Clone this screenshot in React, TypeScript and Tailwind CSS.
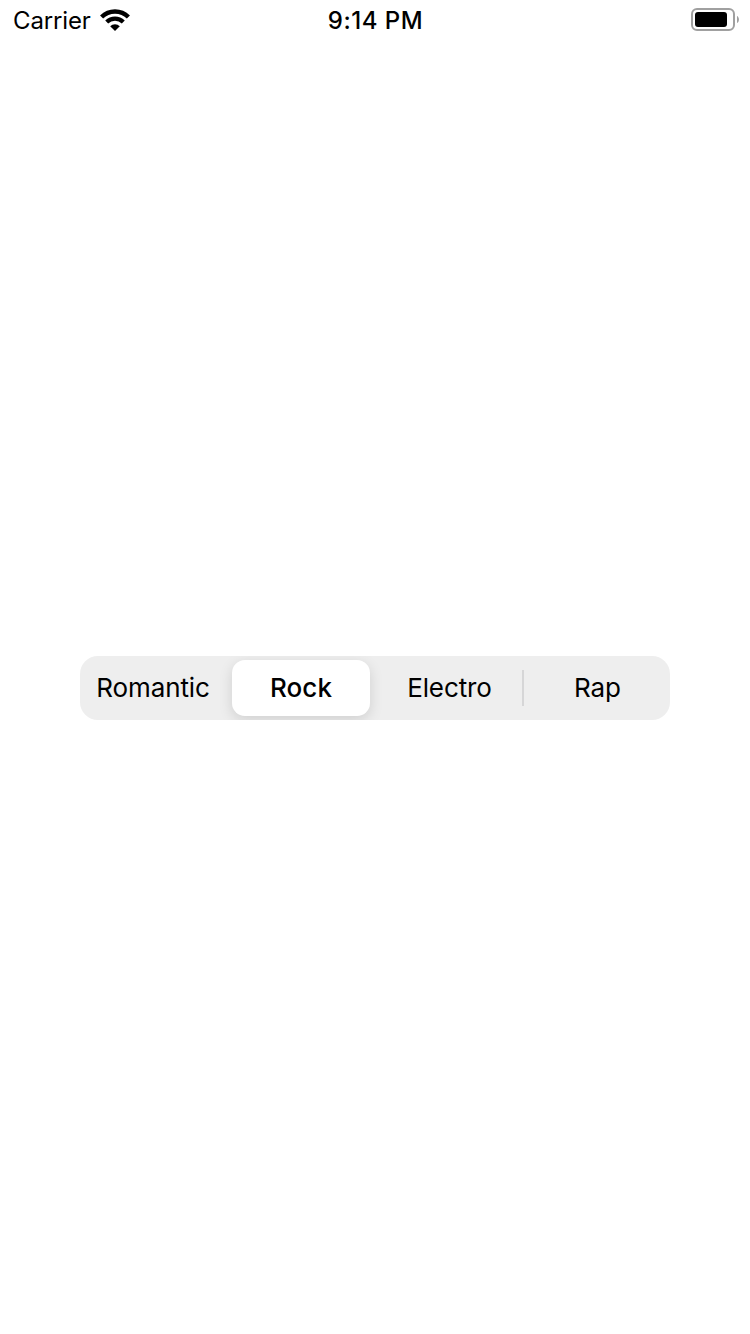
const tabs = [
  { label: "Romantic", style: "w-[146px] tracking-[-0.1px]" },
  { label: "Rock", style: "mx-[6px] w-[138px] rounded-[13px] bg-white font-medium tracking-[0.1px] shadow-[0_4px_14px_rgba(0,0,0,0.13)]" },
  { label: "Electro", style: "w-[146px] pl-px tracking-[-0.1px]" },
  { label: "Rap", style: "w-[146px] pl-px tracking-[-0.1px]" },
];

export default function App() {
  return (
    <div className="flex h-[1334px] w-[750px] flex-col bg-white font-['Inter',sans-serif] text-black">
      <header className="grid h-10 grid-cols-3 items-center pl-[13px] pr-[10px] text-[24px]">
        <div className="flex items-center gap-[9px]">
          <span className="pt-[2px] tracking-[-0.15px]">Carrier</span>
          <svg width="30" height="22" viewBox="0 0 30 22" fill="none" stroke="black">
            <path d="M1.6 8a19 19 0 0 1 26.8 0" strokeWidth="4.4" />
            <path d="M6.7 13.1a11.8 11.8 0 0 1 16.6 0" strokeWidth="4.2" />
            <path d="M10.2 17.2a6.8 6.8 0 0 1 9.6 0L15 22z" fill="black" stroke="none" />
          </svg>
        </div>
        <span className="pt-[2px] pr-[2px] text-center font-medium tracking-[0.5px]">9:14 PM</span>
        <svg className="justify-self-end" width="49" height="24" viewBox="0 0 49 24">
          <rect x="1" y="1" width="42" height="21" rx="5" fill="none" stroke="#a0a0a0" strokeWidth="2" />
          <rect x="4" y="4" width="32" height="15" rx="3" />
          <path d="M46 8c2.6 1 2.6 6 0 7z" fill="#a0a0a0" />
        </svg>
      </header>
      <main className="flex flex-1 flex-col items-center pt-[616px]">
        <div className="flex h-16 w-[590px] items-stretch overflow-hidden rounded-[18px] bg-[#eeeeee] py-1 text-[26px]">
          {tabs.map(({ label, style }, i) => (
            <div key={label} className="flex items-center">
              {i === 3 && <span className="h-9 w-[2px] bg-[#d6d6d7]" />}
              <button className={"flex h-full items-center justify-center pb-[2px] " + style}>{label}</button>
            </div>
          ))}
        </div>
      </main>
    </div>
  );
}
